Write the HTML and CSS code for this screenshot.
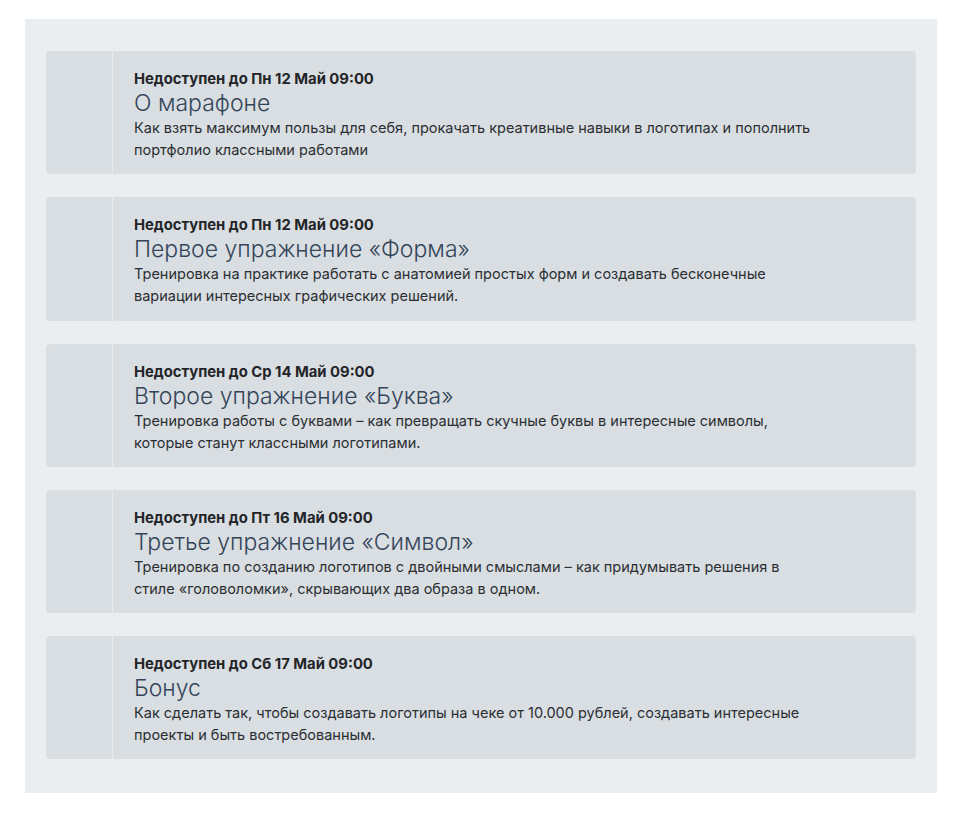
FILE: index.html
```html
<!DOCTYPE html>
<html lang="ru">
<head>
<meta charset="utf-8">
<link rel="stylesheet" href="styles.css">
</head>
<body>
<div class="page">
  <div class="panel">
    <div class="card">
      <div class="side"></div>
      <div class="body">
        <div class="label">Недоступен до Пн 12 Май 09:00</div>
        <div class="title">О марафоне</div>
        <div class="desc">Как взять максимум пользы для себя, прокачать креативные навыки в логотипах и пополнить портфолио классными работами</div>
      </div>
    </div>
    <div class="card">
      <div class="side"></div>
      <div class="body">
        <div class="label">Недоступен до Пн 12 Май 09:00</div>
        <div class="title">Первое упражнение «Форма»</div>
        <div class="desc">Тренировка на практике работать с анатомией простых форм и создавать бесконечные вариации интересных графических решений.</div>
      </div>
    </div>
    <div class="card">
      <div class="side"></div>
      <div class="body">
        <div class="label">Недоступен до Ср 14 Май 09:00</div>
        <div class="title">Второе упражнение «Буква»</div>
        <div class="desc">Тренировка работы с буквами – как превращать скучные буквы в интересные символы, которые станут классными логотипами.</div>
      </div>
    </div>
    <div class="card">
      <div class="side"></div>
      <div class="body">
        <div class="label">Недоступен до Пт 16 Май 09:00</div>
        <div class="title">Третье упражнение «Символ»</div>
        <div class="desc">Тренировка по созданию логотипов с двойными смыслами – как придумывать решения в стиле «головоломки», скрывающих два образа в одном.</div>
      </div>
    </div>
    <div class="card">
      <div class="side"></div>
      <div class="body">
        <div class="label">Недоступен до Сб 17 Май 09:00</div>
        <div class="title">Бонус</div>
        <div class="desc">Как сделать так, чтобы создавать логотипы на чеке от 10.000 рублей, создавать интересные проекты и быть востребованным.</div>
      </div>
    </div>
  </div>
</div>
</body>
</html>
```
FILE: styles.css
```css
html, body {
  margin: 0;
  padding: 0;
  background: #ffffff;
}
body {
  font-family: Inter, "Noto Sans", sans-serif;
}
.page {
  padding: 19px 36px 0 25px;
}
.panel {
  width: 912px;
  background: #ebeef0;
  padding: 32px 21px 34px 21px;
  box-sizing: border-box;
  display: flex;
  flex-direction: column;
  gap: 23px;
}
.card {
  display: flex;
  background: #d9dee2;
  border-radius: 4px;
  height: 123.3px;
  overflow: hidden;
}
.side {
  width: 66px;
  flex: none;
  border-right: 1px solid #e8ebee;
}
.body {
  padding: 18px 0 0 21px;
  width: 684px;
}
.label {
  font-size: 14.8px;
  font-weight: 650;
  color: #232529;
  line-height: 20px;
}
.title {
  font-size: 23px;
  font-weight: 300;
  color: #34455a;
  line-height: 28px;
}
.desc {
  font-size: 14.5px;
  color: #2b2e33;
  line-height: 22px;
}
```
